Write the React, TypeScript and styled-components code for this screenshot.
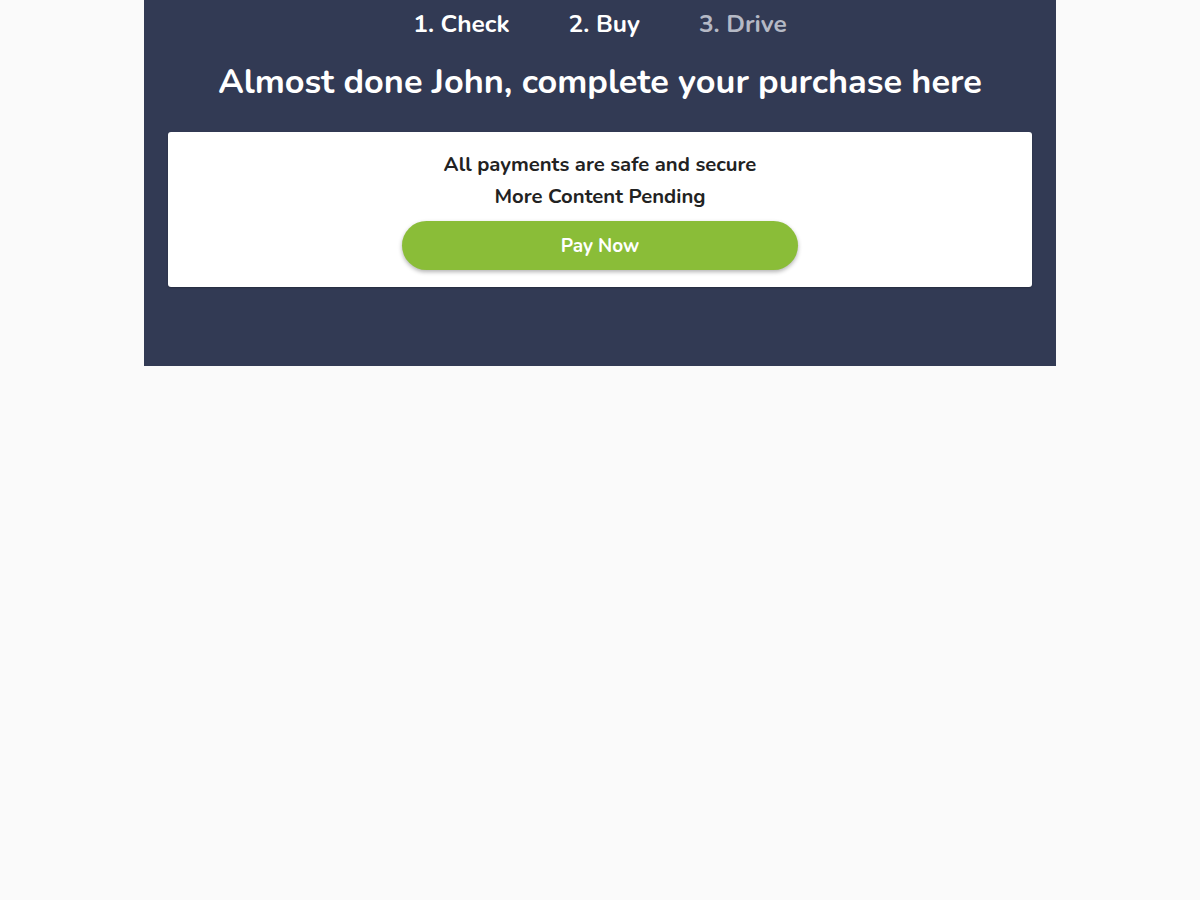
import React from "react";
import styled, { createGlobalStyle } from "styled-components";

const Global = createGlobalStyle`
  html, body { margin: 0; padding: 0; background: #fafafa; }
  body { font-family: "Nunito", "Lato", "Open Sans", sans-serif; }
`;

const Panel = styled.section`
  width: 912px;
  margin: 0 auto;
  background: #323a54;
  height: 366px;
  box-sizing: border-box;
  padding: 0 24px;
  display: flex;
  flex-direction: column;
`;

const Steps = styled.nav`
  display: flex;
  justify-content: center;
  gap: 59px;
  padding-top: 8px;
  height: 40px;
  box-sizing: border-box;
`;

const Step = styled.span<{ $muted?: boolean }>`
  font-size: 24.5px;
  font-weight: 700;
  line-height: 32px;
  color: ${(p) => (p.$muted ? "#b5b9c5" : "#ffffff")};
`;

const Heading = styled.h1`
  margin: 20px 0 0;
  text-align: center;
  font-size: 34.3px;
  font-weight: 700;
  line-height: 44px;
  color: #ffffff;
`;

const Card = styled.div`
  margin-top: 28px;
  background: #ffffff;
  border-radius: 3px;
  box-shadow: 0 1px 2px rgba(0, 0, 0, 0.25);
  padding: 16px 0 17px;
  display: flex;
  flex-direction: column;
  align-items: center;
`;

const Line = styled.p`
  margin: 0;
  font-size: 20.3px;
  font-weight: 700;
  line-height: 32px;
  color: #222222;
`;

const PayButton = styled.button`
  margin-top: 9px;
  width: 396px;
  height: 49px;
  border: none;
  border-radius: 25px;
  background: #8abd38;
  color: #ffffff;
  font-family: inherit;
  font-size: 19px;
  font-weight: 700;
  box-shadow: 0 2px 4px rgba(0, 0, 0, 0.3);
  cursor: pointer;
`;

export default function App() {
  return (
    <>
      <Global />
      <Panel>
        <Steps>
          <Step>1. Check</Step>
          <Step>2. Buy</Step>
          <Step $muted>3. Drive</Step>
        </Steps>
        <Heading>Almost done John, complete your purchase here</Heading>
        <Card>
          <Line>All payments are safe and secure</Line>
          <Line>More Content Pending</Line>
          <PayButton>Pay Now</PayButton>
        </Card>
      </Panel>
    </>
  );
}
